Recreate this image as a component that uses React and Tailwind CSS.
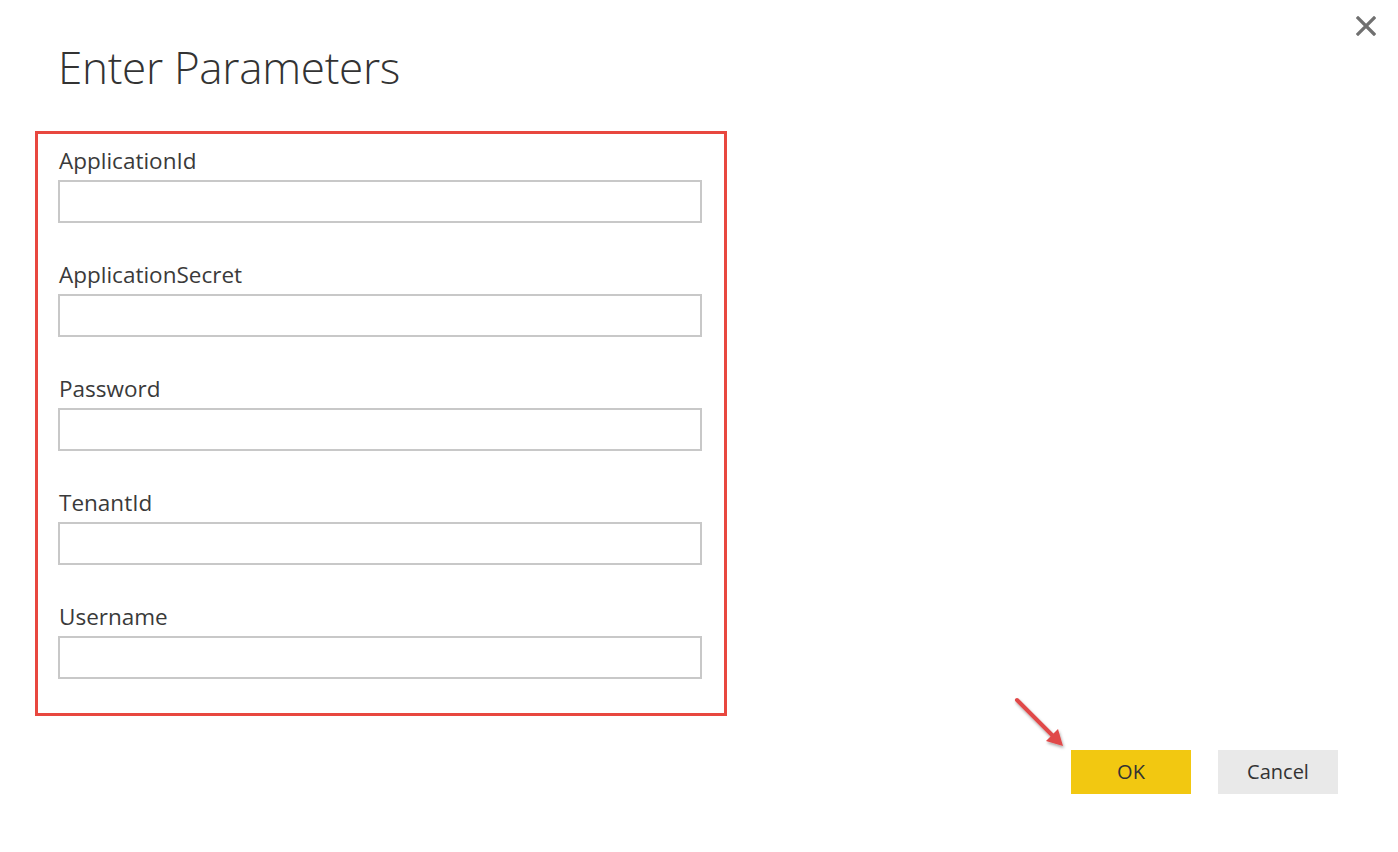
import React from 'react';

const fields = ['ApplicationId', 'ApplicationSecret', 'Password', 'TenantId', 'Username'];

const CloseIcon = () => (
    <svg width="20" height="20" viewBox="0 0 20 20" className="text-[#707070]">
        <path d="M2 2 L18 18 M18 2 L2 18" stroke="currentColor" strokeWidth="3.2" strokeLinecap="square" />
    </svg>
);

// Red annotation arrow pointing at the OK button
const Arrow = () => (
    <svg width="60" height="60" viewBox="0 0 60 60" className="overflow-visible">
        <defs>
            <filter id="sh" x="-20%" y="-20%" width="160%" height="160%">
                <feDropShadow dx="1" dy="2" stdDeviation="1.5" floodColor="#000" floodOpacity="0.35" />
            </filter>
        </defs>
        <g filter="url(#sh)">
            <path d="M3 3 L42 42" stroke="#e04848" strokeWidth="4" strokeLinecap="round" />
            <path d="M49 49 L32 44 L44 32 Z" fill="#e04848" />
        </g>
    </svg>
);

const App = () => {
    return (
        <div className="w-[1398px] h-[852px] bg-white relative font-['Open_Sans',sans-serif] text-[#333]">
            <button className="absolute top-[16px] right-[22px]">
                <CloseIcon />
            </button>

            <div className="pl-[58px] pt-[37px]">
                <h1 className="text-[44px] font-light leading-[60px] tracking-[-0.3px] text-[#333]">Enter Parameters</h1>
            </div>

            <div className="ml-[35px] mt-[34px] w-[692px] h-[585px] border-[3px] border-[#e8473f] pt-[12px] pl-[20px] pr-[22px]">
                <div className="flex flex-col gap-[37px]">
                    {fields.map((f) => (
                        <div key={f} className="flex flex-col">
                            <label className="text-[22.5px] leading-[30px] pl-[1px] mb-[4px] text-[#3a3a3a]">{f}</label>
                            <input
                                type="text"
                                className="w-[644px] h-[43px] border-2 border-[#c8c8c8] outline-none px-2"
                            />
                        </div>
                    ))}
                </div>
            </div>

            <div className="absolute left-[1014px] top-[697px]">
                <Arrow />
            </div>

            <div className="absolute left-[1071px] top-[750px] flex gap-[27px]">
                <button className="w-[120px] h-[44px] bg-[#f2c811] text-[20px] text-[#333]">OK</button>
                <button className="w-[120px] h-[44px] bg-[#e9e9e9] text-[20px] text-[#333]">Cancel</button>
            </div>
        </div>
    );
};

export default App;
